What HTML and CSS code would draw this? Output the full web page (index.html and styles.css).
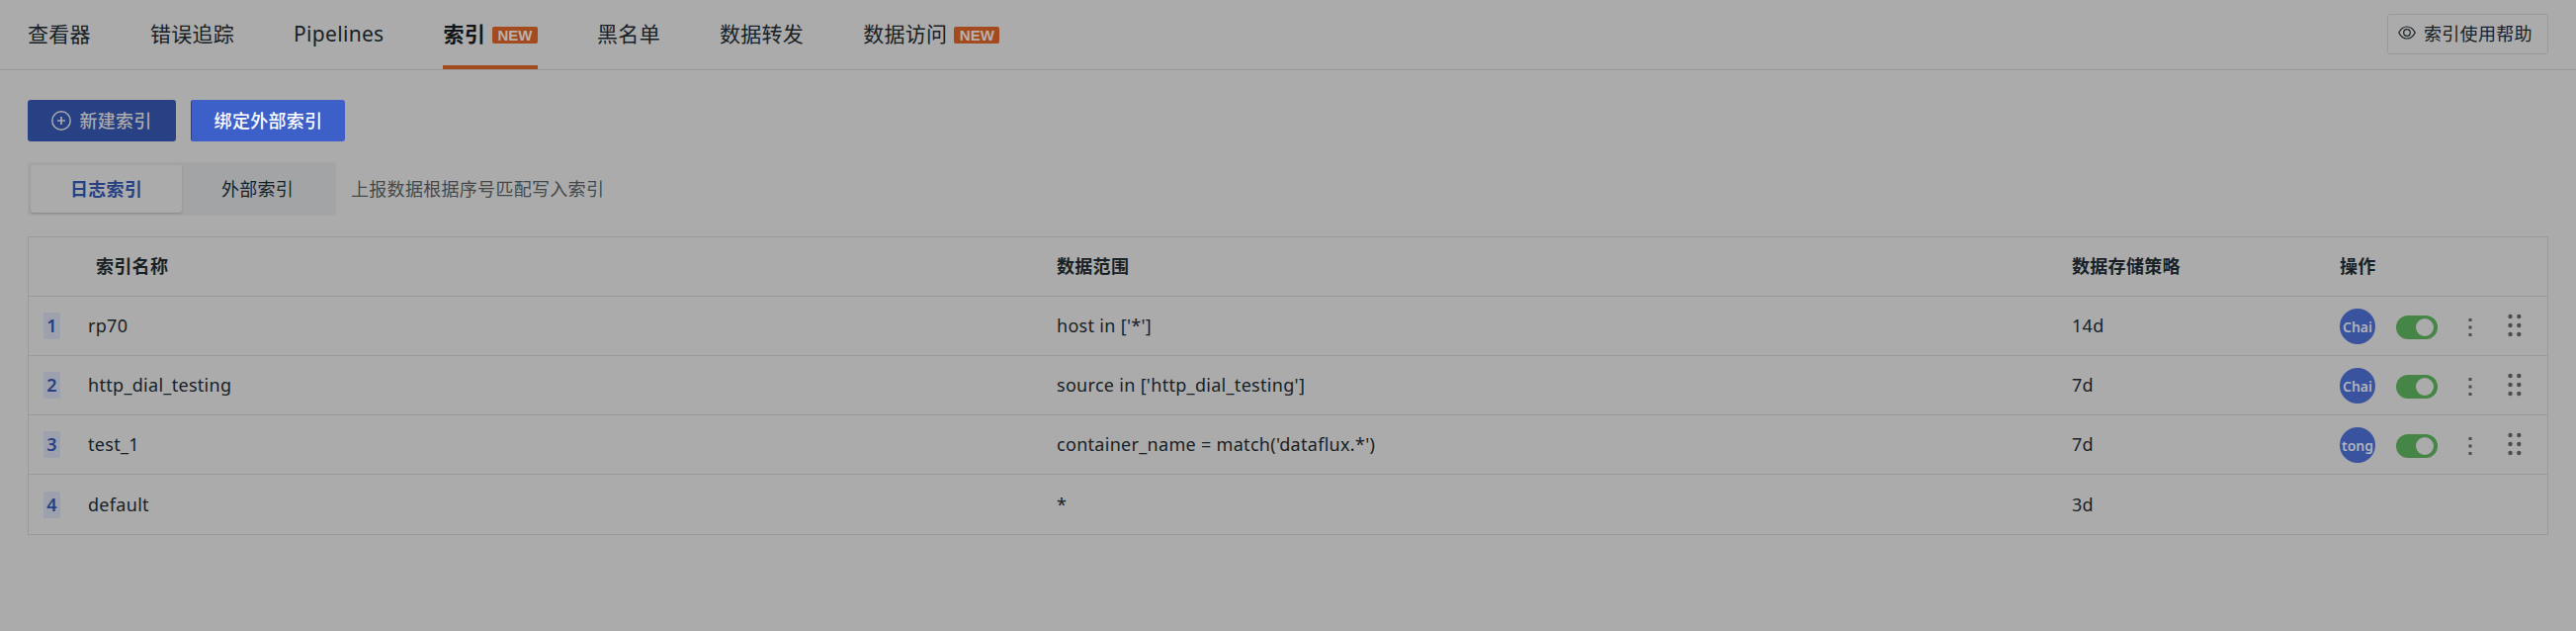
FILE: index.html
```html
<!DOCTYPE html>
<html lang="zh-CN">
<head>
<meta charset="utf-8">
<title>索引</title>
<link rel="stylesheet" href="styles.css">
</head>
<body>
<svg class="defs" width="0" height="0">
  <symbol id="more" viewBox="0 0 4 20"><path d="M.5 1h3v3h-3zM.5 8.5h3v3h-3zM.5 16h3v3h-3z" fill="currentColor"/></symbol>
  <symbol id="drag" viewBox="0 0 14 24"><g fill="currentColor"><circle cx="2.5" cy="3" r="2.2"/><circle cx="11.3" cy="3" r="2.2"/><circle cx="2.5" cy="12" r="2.2"/><circle cx="11.3" cy="12" r="2.2"/><circle cx="2.5" cy="21" r="2.2"/><circle cx="11.3" cy="21" r="2.2"/></g></symbol>
</svg>
<header class="nav">
  <nav class="tabs">
    <a class="tab">查看器</a>
    <a class="tab">错误追踪</a>
    <a class="tab">Pipelines</a>
    <a class="tab active">索引<span class="new">NEW</span></a>
    <a class="tab">黑名单</a>
    <a class="tab">数据转发</a>
    <a class="tab">数据访问<span class="new">NEW</span></a>
  </nav>
  <button class="help">
    <svg width="18" height="14" viewBox="0 0 18 14" fill="none" stroke="currentColor" stroke-width="1.2"><path d="M.8 7C2.8 3 5.6 1 9 1s6.200 2 8.200 6C15.200 11 12.400 13 9 13S2.800 11 .8 7z"/><circle cx="9" cy="7" r="3.300"/></svg>
    <span>索引使用帮助</span>
  </button>
</header>
<main class="page">
  <div class="actions">
    <button class="btn create">
      <svg width="20" height="20" viewBox="0 0 20 20" fill="none" stroke="currentColor"><circle cx="10" cy="10" r="9.200" stroke-width="1.500"/><path d="M10 6v8M6 10h8" stroke-width="1.700"/></svg>
      <span>新建索引</span>
    </button>
    <button class="btn bind"><span>绑定外部索引</span></button>
  </div>
  <div class="filter">
    <div class="segments">
      <span class="segment selected">日志索引</span>
      <span class="segment">外部索引</span>
    </div>
    <span class="hint">上报数据根据序号匹配写入索引</span>
  </div>
  <section class="table">
    <div class="row head"><span></span><span class="name">索引名称</span><span>数据范围</span><span>数据存储策略</span><span>操作</span></div>
    <div class="row"><span class="num">1</span><span>rp70</span><span>host in ['*']</span><span>14d</span>
      <div class="ops"><span class="avatar">Chai</span><span class="switch"></span><svg class="more"><use href="#more"/></svg><svg class="drag"><use href="#drag"/></svg></div></div>
    <div class="row"><span class="num">2</span><span>http_dial_testing</span><span>source in ['http_dial_testing']</span><span>7d</span>
      <div class="ops"><span class="avatar">Chai</span><span class="switch"></span><svg class="more"><use href="#more"/></svg><svg class="drag"><use href="#drag"/></svg></div></div>
    <div class="row"><span class="num">3</span><span>test_1</span><span>container_name = match('dataflux.*')</span><span>7d</span>
      <div class="ops"><span class="avatar">tong</span><span class="switch"></span><svg class="more"><use href="#more"/></svg><svg class="drag"><use href="#drag"/></svg></div></div>
    <div class="row last"><span class="num">4</span><span>default</span><span>*</span><span>3d</span></div>
  </section>
</main>
</body>
</html>
```

FILE: styles.css
```css
* { box-sizing: border-box; }
body {
  margin: 0;
  min-height: 638px;
  background: #ababab;
  color: #182126;
  font: 18px/27px "Noto Sans", "Noto Sans CJK SC", sans-serif;
  letter-spacing: .3px;
}
button { font: inherit; letter-spacing: inherit; }
svg { display: block; flex: none; }
.defs { position: absolute; }

.nav {
  display: flex;
  justify-content: space-between;
  align-items: flex-start;
  height: 71px;
  padding: 0 28px;
  border-bottom: 1px solid #989a9b;
}
.tabs { display: flex; gap: 60px; }
.tab {
  display: flex;
  align-items: center;
  height: 70px;
  padding-top: 2px;
  border-bottom: 4px solid transparent;
  font-size: 21px;
  white-space: nowrap;
}
.tab.active { font-weight: 700; color: #111516; border-color: #a14a1e; }
.new {
  width: 46px;
  height: 17px;
  margin: 3px 0 0 7px;
  border-radius: 2px;
  background: #a34b1e;
  color: #b9b1ad;
  font: 700 15px/18px "Liberation Sans", sans-serif;
  letter-spacing: 0;
  text-align: center;
}
.help {
  display: flex;
  align-items: center;
  gap: 8px;
  width: 163px;
  height: 41px;
  margin-top: 14px;
  padding: 0 10px;
  border: 1px solid #989a9b;
  border-radius: 3px;
  background: none;
  color: #182126;
  white-space: nowrap;
}
.help svg { margin-bottom: 3px; }

.page { padding: 30px 28px 0; }
.actions { display: flex; gap: 15px; }
.btn {
  display: flex;
  align-items: center;
  justify-content: center;
  height: 42px;
  padding: 0;
  border: 0;
  border-radius: 3px;
  font-weight: 500;
  white-space: nowrap;
}
.btn span { padding-top: 1px; }
.create { width: 150px; gap: 8px; background: #284084; color: #ababab; }
.bind { width: 156px; border-left: 1px solid #284084; background: #3d60c8; color: #fff; }

.filter { display: flex; align-items: center; gap: 15px; margin-top: 21px; }
.segments {
  display: flex;
  width: 312px;
  height: 54px;
  padding: 3px;
  border-radius: 3px;
  background: #a2a4a6;
}
.segment { flex: 1; line-height: 49px; text-align: center; }
.segment.selected {
  border-radius: 3px;
  background: #ababab;
  box-shadow: 0 1px 2px rgba(0, 0, 0, .18);
  color: #284084;
  font-weight: 700;
}
.hint { padding-top: 1px; color: #464849; }

.table { margin-top: 21px; border: 1px solid #989a9b; }
.row {
  display: grid;
  grid-template-columns: 45px 980px 1027px 271px 1fr;
  align-items: center;
  height: 60px;
  padding-left: 15px;
  border-bottom: 1px solid #989a9b;
}
.row.last { border-bottom: 0; }
.head { font-weight: 700; }
.name { padding-left: 8px; }
.num {
  width: 17px;
  height: 27px;
  border-radius: 3px;
  background: #9da0ad;
  color: #284084;
  font-weight: 600;
  text-align: center;
}
.ops { display: flex; align-items: center; }
.avatar {
  display: flex;
  justify-content: center;
  width: 36px;
  height: 36px;
  border-radius: 50%;
  background: #3a539f;
  color: #b0b3bb;
  font-size: 14px;
  font-weight: 600;
  letter-spacing: 0;
  line-height: 37px;
}
.switch {
  display: flex;
  justify-content: flex-end;
  width: 42px;
  height: 24px;
  margin: 2px 0 0 21px;
  padding: 3px 4px 3px 3px;
  border-radius: 12px;
  background: #458545;
}
.switch::after { content: ""; width: 18px; height: 18px; border-radius: 50%; background: #ababab; }
.more { width: 4px; height: 20px; margin: 2px 0 0 31px; color: #4d4d4d; }
.drag { width: 14px; height: 24px; margin: 0 0 2px 36px; color: #4d4d4d; }
```
